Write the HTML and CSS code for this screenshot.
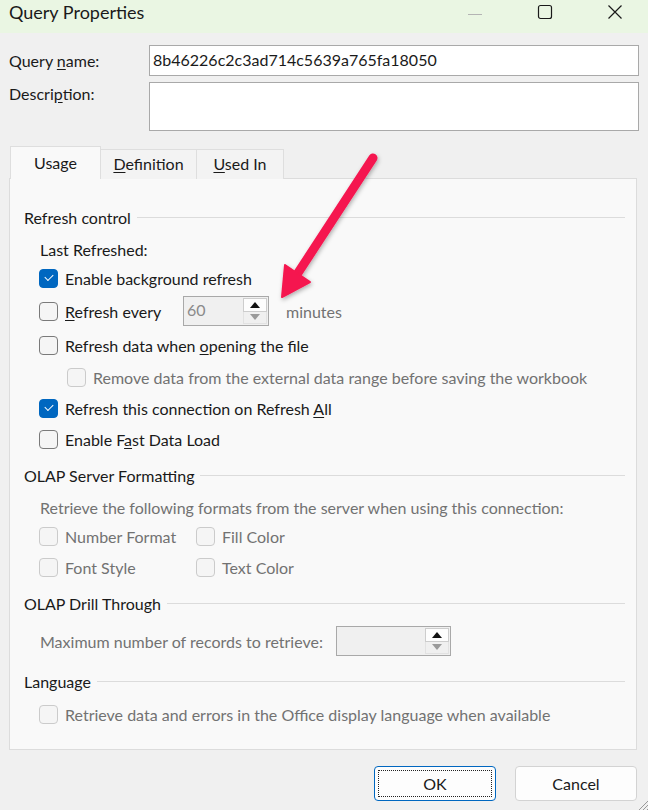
FILE: index.html
```html
<!DOCTYPE html>
<html lang="en">
<head>
    <meta charset="UTF-8">
    <meta name="viewport" content="width=device-width, initial-scale=1.0">
    <title>Query Properties</title>
    <link rel="stylesheet" href="styles.css">
</head>
<body>
    <div id="dialog">
        <div class="titlebar">
            <span class="title">Query Properties</span>
            <div class="caption-buttons">
                <span class="cap-btn min">
                    <svg width="16" height="16" viewBox="0 0 16 16"><path d="M1 8.5h14" stroke="#b4b4b4" stroke-width="1"/></svg>
                </span>
                <span class="cap-btn max">
                    <svg width="16" height="16" viewBox="0 0 16 16"><rect x="1.5" y="1.5" width="13" height="13" rx="2" fill="none" stroke="#1a1a1a" stroke-width="1.2"/></svg>
                </span>
                <span class="cap-btn close">
                    <svg width="16" height="16" viewBox="0 0 16 16"><path d="M1.5 1.5l13 13M14.5 1.5l-13 13" stroke="#1a1a1a" stroke-width="1.2"/></svg>
                </span>
            </div>
        </div>

        <div class="content">
            <div class="field">
                <label>Query <u>n</u>ame:</label>
                <div class="textbox">8b46226c2c3ad714c5639a765fa18050</div>
            </div>
            <div class="field top">
                <label>Descri<u>p</u>tion:</label>
                <div class="textbox multi"></div>
            </div>

            <div class="tabs">
                <div class="tab active" style="width: 91px;">Usage</div>
                <div class="tab" style="width: 96px;"><u>D</u>efinition</div>
                <div class="tab" style="width: 87px;"><u>U</u>sed In</div>
            </div>

            <div class="panel">
                <div class="group-title"><span>Refresh control</span><i></i></div>
                <div class="item short">Last Refreshed:</div>
                <div class="item">
                    <span class="check on"></span>
                    <span>Enable background refresh</span>
                </div>
                <div class="item tall">
                    <span class="check"></span>
                    <span class="every"><u>R</u>efresh every</span>
                    <div class="spinner small">
                        <span class="value">60</span>
                        <div class="spin-btns">
                            <span class="spin up"></span>
                            <span class="spin down"></span>
                        </div>
                    </div>
                    <span class="muted minutes">minutes</span>
                </div>
                <div class="item tall">
                    <span class="check"></span>
                    <span>Refresh data when <u>o</u>pening the file</span>
                </div>
                <div class="item sub">
                    <span class="check off"></span>
                    <span class="muted">Remove data from the external data range before saving the workbook</span>
                </div>
                <div class="item">
                    <span class="check on"></span>
                    <span>Refresh this connection on Refresh <u>A</u>ll</span>
                </div>
                <div class="item">
                    <span class="check"></span>
                    <span>Enable F<u>a</u>st Data Load</span>
                </div>

                <div class="group-title spaced"><span>OLAP Server Formatting</span><i></i></div>
                <div class="item short muted">Retrieve the following formats from the server when using this connection:</div>
                <div class="format-grid">
                    <div class="item"><span class="check off"></span><span class="muted">Number Format</span></div>
                    <div class="item"><span class="check off"></span><span class="muted">Fill Color</span></div>
                    <div class="item"><span class="check off"></span><span class="muted">Font Style</span></div>
                    <div class="item"><span class="check off"></span><span class="muted">Text Color</span></div>
                </div>

                <div class="group-title spaced"><span>OLAP Drill Through</span><i></i></div>
                <div class="item records">
                    <span class="muted records-label">Maximum number of records to retrieve:</span>
                    <div class="spinner wide">
                        <span class="value"></span>
                        <div class="spin-btns">
                            <span class="spin up"></span>
                            <span class="spin down"></span>
                        </div>
                    </div>
                </div>

                <div class="group-title spaced"><span>Language</span><i></i></div>
                <div class="item">
                    <span class="check off"></span>
                    <span class="muted">Retrieve data and errors in the Office display language when available</span>
                </div>
            </div>

            <div class="buttons">
                <button class="btn default"><span>OK</span></button>
                <button class="btn">Cancel</button>
            </div>
        </div>

        <!-- annotation arrow drawn on top of the screenshot -->
        <svg class="arrow" width="648" height="810" viewBox="0 0 648 810">
            <defs>
                <filter id="shadow" x="-20%" y="-20%" width="140%" height="140%">
                    <feDropShadow dx="1" dy="2" stdDeviation="2" flood-color="#000" flood-opacity="0.3"/>
                </filter>
            </defs>
            <g filter="url(#shadow)" fill="#f5154f" stroke="#f5154f">
                <line x1="373" y1="158" x2="296" y2="276" stroke-width="9" stroke-linecap="round"/>
                <polygon points="282,297 285,265 310,282" stroke-width="2" stroke-linejoin="round"/>
            </g>
        </svg>

        <svg class="grip" width="10" height="10" viewBox="0 0 10 10">
            <path d="M10 1L1 10M10 5L5 10M10 9L9 10" stroke="#9a9a9a" stroke-width="1"/>
        </svg>
    </div>
</body>
</html>
```

FILE: styles.css
```css
body {
    margin: 0;
    padding: 0;
    background-color: #f0f0f0;
    font-family: Lato, "Noto Sans", sans-serif;
    font-size: 16px;
    color: #1a1a1a;
}
u {
    text-underline-offset: 2px;
}
#dialog {
    position: relative;
    width: 648px;
    height: 810px;
    overflow: hidden;
}
.titlebar {
    height: 33px;
    background-color: #eaf6e3;
    display: flex;
    align-items: flex-start;
}
.title {
    font-size: 18px;
    line-height: 24px;
    padding-left: 9px;
}
.caption-buttons {
    margin-left: auto;
    display: flex;
}
.cap-btn {
    height: 24px;
    display: flex;
    align-items: center;
    justify-content: center;
}
.cap-btn.min {
    width: 66px;
    padding-top: 2px;
}
.cap-btn.max {
    width: 74px;
}
.cap-btn.close {
    width: 66px;
}

.content {
    padding: 12px 11px 0 9px;
}
.field {
    display: flex;
    align-items: center;
    margin-bottom: 6px;
}
.field.top {
    align-items: flex-start;
}
.field label {
    width: 140px;
    line-height: 24px;
}
.textbox {
    flex: 1;
    height: 31px;
    box-sizing: border-box;
    border: 1px solid #a9a9a9;
    background-color: #fff;
    padding-left: 3px;
    line-height: 28px;
    margin-right: -2px;
}
.textbox.multi {
    height: 49px;
}

.tabs {
    display: flex;
    align-items: flex-end;
    height: 33px;
    margin-top: 15px;
    margin-bottom: -1px;
    padding-left: 1px;
}
.tab {
    height: 30px;
    box-sizing: border-box;
    border: 1px solid #dedede;
    border-bottom: none;
    border-left: none;
    background-color: #f3f3f3;
    text-align: center;
    line-height: 27px;
}
.tab.active {
    height: 33px;
    border-left: 1px solid #dedede;
    background-color: #f9f9f9;
    line-height: 32px;
    position: relative;
    z-index: 1;
}

.panel {
    height: 572px;
    box-sizing: border-box;
    border: 1px solid #dcdcdc;
    background-color: #f9f9f9;
    padding: 24px 11px 0 14px;
}
.group-title {
    display: flex;
    align-items: center;
    height: 28px;
    margin-bottom: 4px;
}
.group-title.spaced {
    margin-top: 6px;
}
.group-title i {
    flex: 1;
    height: 1px;
    background-color: #dcdcdc;
    margin-left: 6px;
}
.item {
    display: flex;
    align-items: center;
    height: 31px;
    padding-left: 15px;
    white-space: nowrap;
}
.item.short {
    height: 28px;
    padding-left: 16px;
}
.item.tall {
    height: 34px;
}
.item.sub {
    padding-left: 43px;
}
.muted {
    color: #727272;
}

.check {
    width: 19px;
    height: 19px;
    box-sizing: border-box;
    border: 1px solid #7a7a7a;
    border-radius: 4px;
    background-color: #f5f5f5;
    margin-right: 7px;
    flex-shrink: 0;
    position: relative;
}
.check.off {
    border-color: #cbcbcb;
}
.check.on {
    border-color: #0067c0;
    background-color: #0067c0;
}
.check.on::after {
    content: "";
    position: absolute;
    left: 5px;
    top: 4px;
    width: 7px;
    height: 4px;
    border-left: 1px solid #fff;
    border-bottom: 1px solid #fff;
    transform: rotate(-45deg);
}

.every {
    width: 118px;
}
.spinner {
    display: flex;
    height: 30px;
    box-sizing: border-box;
    border: 1px solid #a9a9a9;
    background-color: #f0f0f0;
}
.spinner.small {
    width: 86px;
}
.spinner.wide {
    width: 115px;
}
.spinner .value {
    flex: 1;
    color: #8a8a8a;
    padding-left: 3px;
    line-height: 26px;
}
.spin-btns {
    width: 24px;
    display: flex;
    flex-direction: column;
    padding: 1px 1px 1px 0;
}
.spin {
    flex: 1;
    position: relative;
}
.spin.up {
    background-color: #fdfdfd;
    border: 1px solid #cdcdcd;
}
.spin.down {
    border: 1px solid #e2e2e2;
    border-top: none;
}
.spin::after {
    content: "";
    position: absolute;
    left: 50%;
    top: 50%;
    margin-left: -5px;
    margin-top: -3px;
    border-left: 5px solid transparent;
    border-right: 5px solid transparent;
}
.spin.up::after {
    border-bottom: 6px solid #111;
}
.spin.down::after {
    border-top: 6px solid #9a9a9a;
}
.minutes {
    margin-left: 17px;
}

.format-grid {
    display: grid;
    grid-template-columns: 172px auto;
    width: 420px;
}
.format-grid .item:nth-child(2n) {
    padding-left: 0;
}
.item.records {
    height: 40px;
    padding-left: 16px;
}
.records-label {
    width: 296px;
}

.buttons {
    display: flex;
    justify-content: flex-end;
    gap: 19px;
    margin-top: 16px;
}
.btn {
    width: 122px;
    height: 35px;
    font-family: inherit;
    font-size: 16px;
    color: #1a1a1a;
    background-color: #fdfdfd;
    border: 1px solid #d3d3d3;
    border-radius: 4px;
    padding: 0;
}
.btn.default {
    border-color: #0067c0;
    padding: 3px;
}
.btn.default span {
    display: block;
    height: 100%;
    box-sizing: border-box;
    border: 1px dotted #222;
    line-height: 25px;
}

.arrow {
    position: absolute;
    left: 0;
    top: 0;
    pointer-events: none;
}
.grip {
    position: absolute;
    right: 0;
    bottom: 0;
}
```
